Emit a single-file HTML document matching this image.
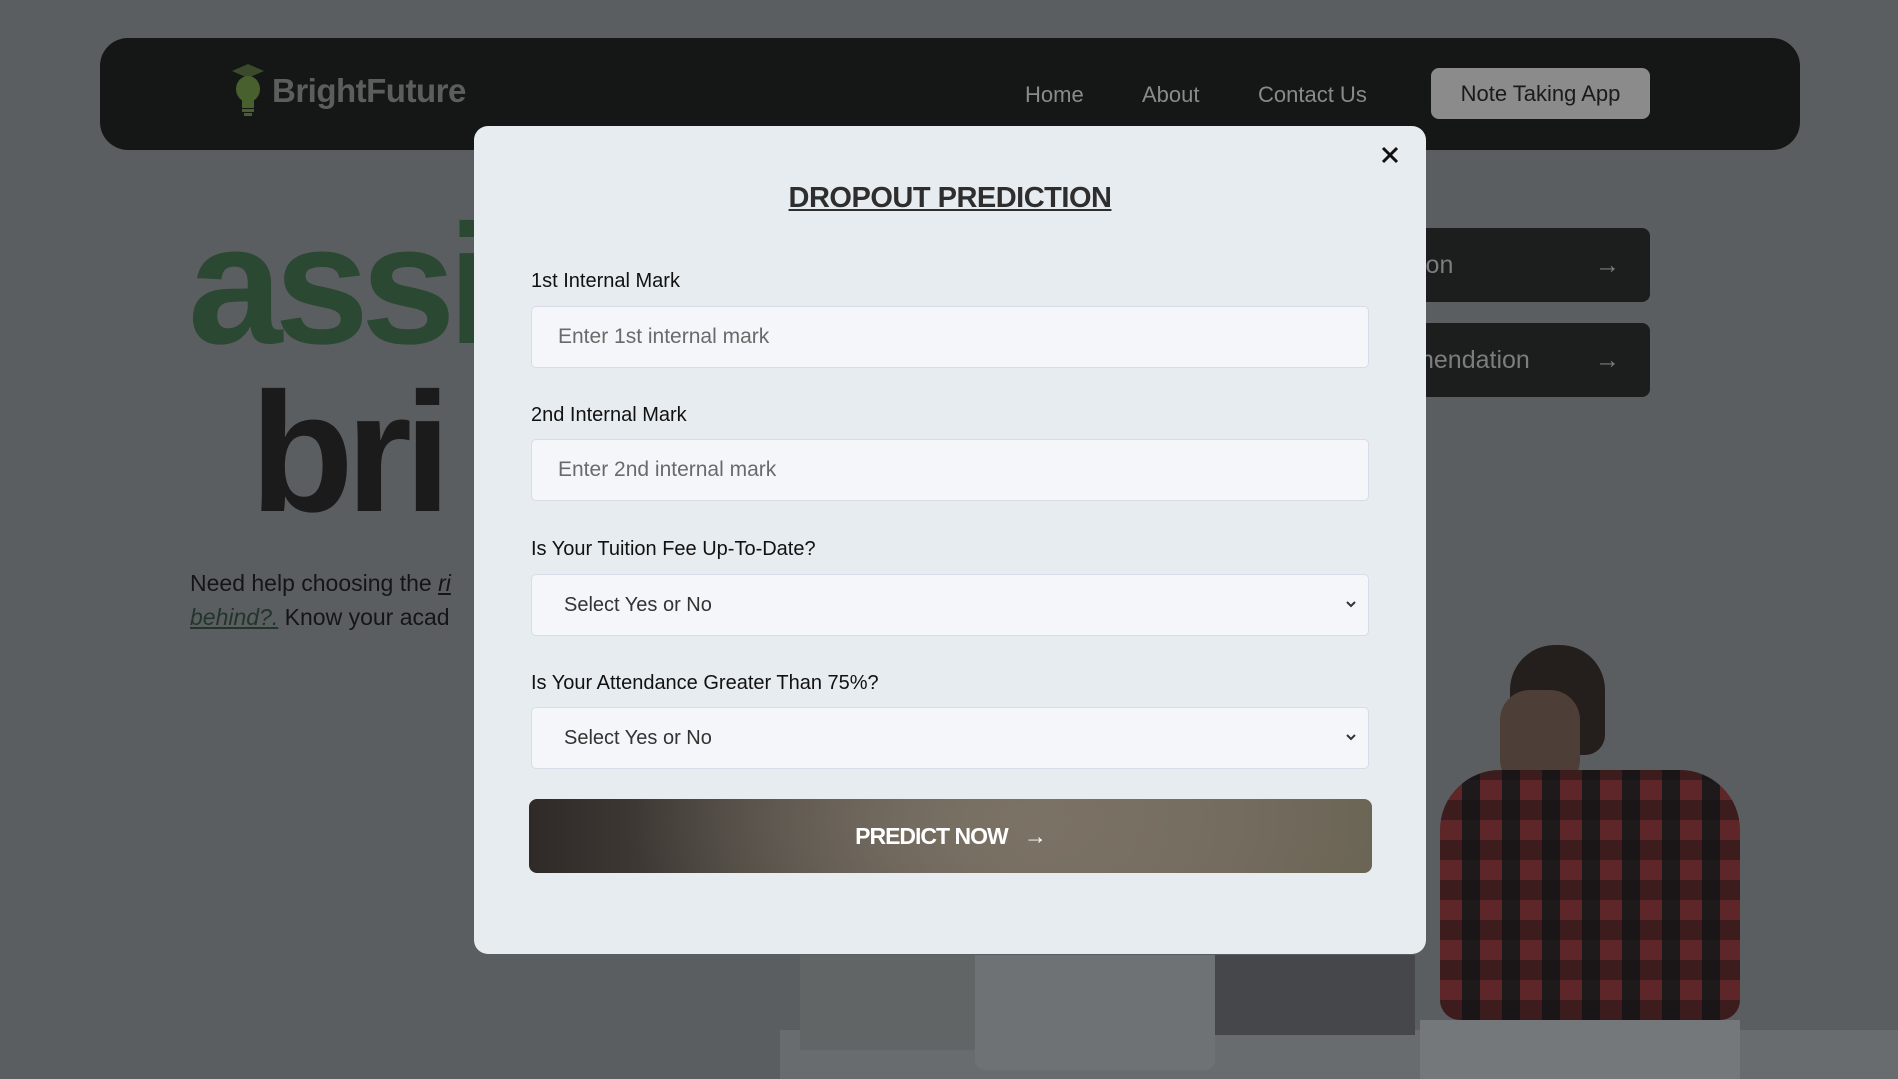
<!DOCTYPE html>
<html><head><meta charset="utf-8"><style>
*{margin:0;padding:0;box-sizing:border-box}
body{width:1898px;height:1079px;overflow:hidden;background:#5b5e61;font-family:"Liberation Sans",sans-serif;position:relative}
.abs{position:absolute}
.nav{left:100px;top:38px;width:1700px;height:112px;background:#151716;border-radius:28px}
.brand{left:272px;top:72px;font-size:33px;font-weight:bold;color:#5d5d5d;letter-spacing:-0.5px}
.nl{top:82px;font-size:22px;color:#8a8a8a}
.note{left:1431px;top:68px;width:219px;height:51px;background:#8b8b8b;border-radius:8px;color:#1a1a1a;font-size:22px;text-align:center;line-height:51px}
.big{font-weight:900;font-size:170px;letter-spacing:-8px;line-height:1}
.rb{left:1380px;width:270px;height:74px;background:#1c1d1d;border-radius:8px;color:#7d7d7d;font-size:25px;line-height:74px}
.modal{left:474px;top:126px;width:952px;height:828px;background:#e7ecf0;border-radius:14px}
.lbl{left:531px;font-size:20px;color:#111;font-weight:bold;font-weight:500}
.inp{left:531px;width:838px;height:62px;background:#f5f6f9;border:1px solid #d9dce8;border-radius:5px;font-size:21px;color:#6a6a6a;line-height:60px;padding-left:26px}
.sel{padding-left:32px;color:#333;font-size:20px}
.chev{position:absolute;right:10px;top:22px}
</style></head><body>
<div class="abs" style="left:780px;top:1030px;width:1118px;height:49px;background:#696c6f"></div>
<div class="abs" style="left:800px;top:955px;width:180px;height:95px;background:#626566"></div>
<div class="abs" style="left:975px;top:955px;width:240px;height:115px;background:#6f7275;border-radius:0 0 10px 10px"></div>
<div class="abs" style="left:1215px;top:955px;width:200px;height:80px;background:#45474b"></div>
<div class="abs" style="left:1510px;top:645px;width:95px;height:110px;background:#241e1c;border-radius:45px 45px 20px 20px"></div>
<div class="abs" style="left:1500px;top:690px;width:80px;height:100px;background:#4d3f37;border-radius:30px"></div>
<div class="abs" style="left:1440px;top:770px;width:300px;height:250px;background:repeating-linear-gradient(90deg,#5e2628 0 22px,#1e1a1c 22px 40px);border-radius:60px 60px 20px 20px"></div>
<div class="abs" style="left:1440px;top:770px;width:300px;height:250px;background:repeating-linear-gradient(0deg,rgba(20,15,15,.45) 0 20px,transparent 20px 40px);border-radius:60px 60px 20px 20px"></div>
<div class="abs" style="left:1420px;top:1020px;width:320px;height:59px;background:#75787b"></div>

<div class="abs nav"></div>
<svg class="abs" style="left:230px;top:62px" width="36" height="56" viewBox="0 0 36 56"><path d="M18 2 L34 9 L18 16 L2 9Z" fill="#3b4a2a"/><ellipse cx="18" cy="27" rx="12" ry="13" fill="#48602e"/><rect x="12" y="38" width="12" height="8" fill="#48602e"/><rect x="12" y="47" width="12" height="3" fill="#48602e"/><rect x="14" y="51" width="8" height="3" fill="#48602e"/></svg>
<div class="abs brand">BrightFuture</div>
<div class="abs nl" style="left:1025px">Home</div>
<div class="abs nl" style="left:1142px">About</div>
<div class="abs nl" style="left:1258px">Contact Us</div>
<div class="abs note">Note Taking App</div>

<div class="abs big" style="left:188px;top:200px;color:#2b4832">assis</div>
<div class="abs big" style="left:250px;top:368px;color:#1b1b1b">bri</div>
<div class="abs" style="left:190px;top:566px;font-size:23px;color:#151515;line-height:34px">Need help choosing the <i style="text-decoration:underline">ri</i><br><i style="text-decoration:underline;color:#22352a">behind?.</i> Know your acad</div>
<div class="abs rb" style="top:228px"><span style="position:absolute;left:40px">ion</span><span style="position:absolute;right:30px">→</span></div>
<div class="abs rb" style="top:323px"><span style="position:absolute;left:40px">nendation</span><span style="position:absolute;right:30px">→</span></div>

<div class="abs modal"></div>
<svg class="abs" style="left:1381px;top:146px" width="18" height="18" viewBox="0 0 18 18"><path d="M2 2L16 16M16 2L2 16" stroke="#111" stroke-width="3"/></svg>
<div class="abs" style="left:474px;width:952px;top:182px;text-align:center;font-size:29px;font-weight:bold;color:#2e2e2e;text-decoration:underline;letter-spacing:-0.5px">DROPOUT PREDICTION</div>
<div class="abs lbl" style="top:270px">1st Internal Mark</div>
<div class="abs inp" style="top:306px">Enter 1st internal mark</div>
<div class="abs lbl" style="top:404px">2nd Internal Mark</div>
<div class="abs inp" style="top:439px">Enter 2nd internal mark</div>
<div class="abs lbl" style="top:538px">Is Your Tuition Fee Up-To-Date?</div>
<div class="abs inp sel" style="top:574px">Select Yes or No<svg class="chev" width="14" height="14" viewBox="0 0 14 14"><path d="M3 5l4 4 4-4" stroke="#333" stroke-width="2" fill="none"/></svg></div>
<div class="abs lbl" style="top:672px">Is Your Attendance Greater Than 75%?</div>
<div class="abs inp sel" style="top:707px">Select Yes or No<svg class="chev" width="14" height="14" viewBox="0 0 14 14"><path d="M3 5l4 4 4-4" stroke="#333" stroke-width="2" fill="none"/></svg></div>
<div class="abs" style="left:529px;top:799px;width:843px;height:74px;border-radius:8px;background:radial-gradient(ellipse 400px 200px at 500px 20px,#7b7265,transparent),linear-gradient(90deg,#2f2a27,#55504a 35%,#746c60 60%,#686353)"></div>
<div class="abs" style="left:529px;top:799px;width:843px;height:74px;text-align:center;line-height:74px;color:#fff;font-size:23px;font-weight:bold;letter-spacing:-1px">PREDICT NOW &nbsp;&nbsp;→</div>
</body></html>
